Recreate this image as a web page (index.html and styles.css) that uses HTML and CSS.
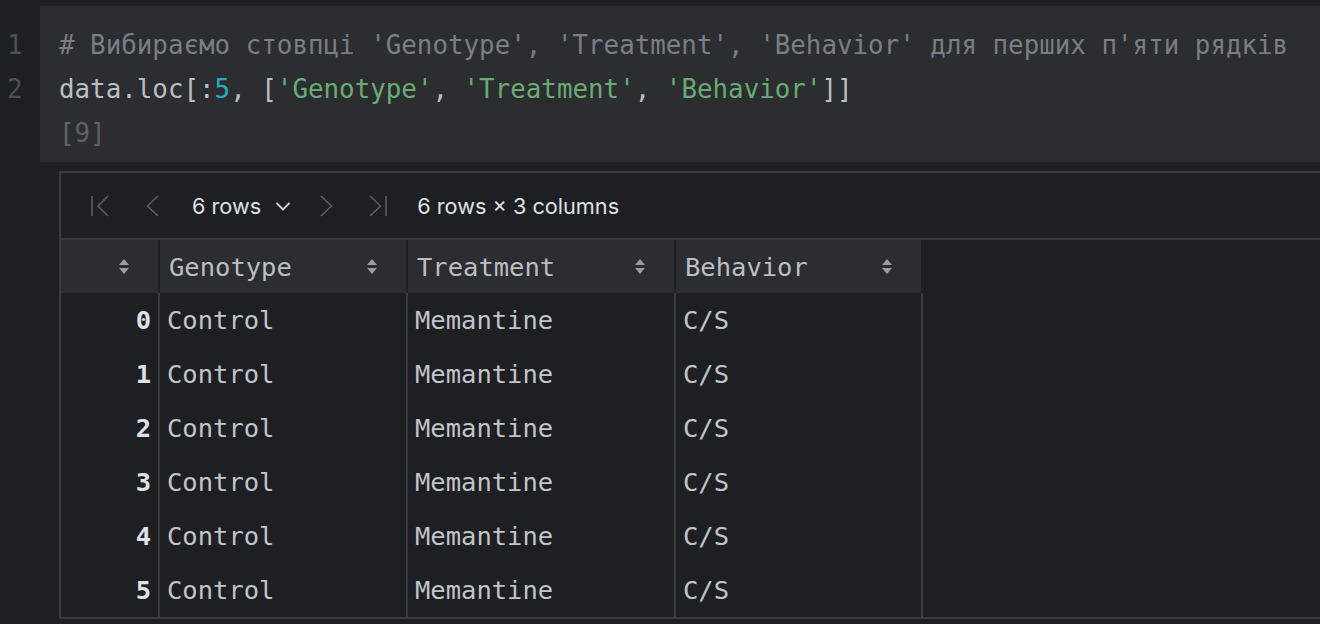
FILE: index.html
```html
<!DOCTYPE html>
<html lang="uk">
<head>
<meta charset="utf-8">
<title>Notebook cell</title>
<link rel="stylesheet" href="styles.css">
</head>
<body>
<div class="cell">
  <div class="gutter">
    <div class="ln">1</div>
    <div class="ln">2</div>
  </div>
  <div class="code">
    <div class="line"><span class="cm"># Вибираємо стовпці 'Genotype', 'Treatment', 'Behavior' для перших п'яти рядків</span></div>
    <div class="line">data.loc[:<span class="num">5</span>, [<span class="str">'Genotype'</span>, <span class="str">'Treatment'</span>, <span class="str">'Behavior'</span>]]</div>
    <div class="line exec">[9]</div>
  </div>
</div>

<div class="frame">
  <div class="toolbar">
    <svg class="ico first" width="24" height="24" viewBox="0 0 24 24"><path d="M4 2V22M20 2L10 12L20 22" /></svg>
    <svg class="ico prev" width="24" height="24" viewBox="0 0 24 24"><path d="M18 2L7.5 12L18 22" /></svg>
    <span class="rows">6 rows</span>
    <svg class="ico drop" width="16" height="24" viewBox="0 0 16 24"><path d="M1.5 9L8 15.5L14.5 9" /></svg>
    <svg class="ico next" width="24" height="24" viewBox="0 0 24 24"><path d="M6 2L16.5 12L6 22" /></svg>
    <svg class="ico last" width="24" height="24" viewBox="0 0 24 24"><path d="M7 2L17.5 12L7 22M23 2V22" /></svg>
    <span class="summary">6 rows × 3 columns</span>
  </div>
  <div class="grid">
    <div class="hd idx"><svg class="sort" width="10" height="16" viewBox="0 0 10 16"><path d="M5 0L10 6H0Z M0 9H10L5 15Z" /></svg></div>
    <div class="hd"><span>Genotype</span><svg class="sort" width="10" height="16" viewBox="0 0 10 16"><path d="M5 0L10 6H0Z M0 9H10L5 15Z" /></svg></div>
    <div class="hd"><span>Treatment</span><svg class="sort" width="10" height="16" viewBox="0 0 10 16"><path d="M5 0L10 6H0Z M0 9H10L5 15Z" /></svg></div>
    <div class="hd"><span>Behavior</span><svg class="sort" width="10" height="16" viewBox="0 0 10 16"><path d="M5 0L10 6H0Z M0 9H10L5 15Z" /></svg></div>
    <div class="hd-fill"></div>

    <div class="c idx">0</div><div class="c">Control</div><div class="c">Memantine</div><div class="c">C/S</div><div class="fill"></div>
    <div class="c idx">1</div><div class="c">Control</div><div class="c">Memantine</div><div class="c">C/S</div><div class="fill"></div>
    <div class="c idx">2</div><div class="c">Control</div><div class="c">Memantine</div><div class="c">C/S</div><div class="fill"></div>
    <div class="c idx">3</div><div class="c">Control</div><div class="c">Memantine</div><div class="c">C/S</div><div class="fill"></div>
    <div class="c idx">4</div><div class="c">Control</div><div class="c">Memantine</div><div class="c">C/S</div><div class="fill"></div>
    <div class="c idx">5</div><div class="c">Control</div><div class="c">Memantine</div><div class="c">C/S</div><div class="fill"></div>
  </div>
</div>
</body>
</html>
```

FILE: styles.css
```css
html, body {
  margin: 0;
  padding: 0;
  background: #1e1f22;
  overflow: hidden;
}

body {
  width: 1320px;
  height: 624px;
  font-family: "DejaVu Sans Mono", "Liberation Mono", monospace;
  color: #bcbec4;
}

.cell {
  display: flex;
  padding-top: 6px;
}

.gutter {
  width: 40px;
  padding-top: 17px;
  flex: none;
}

.ln {
  height: 44px;
  line-height: 44px;
  font-size: 26px;
  color: #4b5059;
  padding-left: 7px;
}

.code {
  flex: 1;
  background: #2b2d30;
  padding: 17px 0 7px 19px;
  font-size: 25.85px;
}

.line {
  height: 44px;
  line-height: 44px;
  white-space: pre;
}

.cm { color: #7a7e85; }
.str { color: #6aab73; }
.num { color: #2aacb8; }
.exec { color: #5f6268; }

.frame {
  margin: 9px -4px 0 59px;
  border: 2px solid #393b40;
}

.toolbar {
  height: 65px;
  display: flex;
  align-items: center;
  border-bottom: 2px solid #393b40;
  font-family: "Inter", "Noto Sans", sans-serif;
  font-size: 21.7px;
  color: #dfe1e5;
}

.ico {
  flex: none;
  fill: none;
  stroke: #5a5d63;
  stroke-width: 1.6;
}

.first { margin-left: 27px; }
.prev { margin-left: 28px; }
.rows { margin-left: 28px; }
.drop { margin-left: 14px; stroke: #ced0d6; stroke-width: 1.8; }
.next { margin-left: 24px; }
.last { margin-left: 24px; }
.summary { margin-left: 30px; }

.grid {
  display: grid;
  grid-template-columns: 99px 248px 268px 247px 1fr;
  grid-template-rows: 53px repeat(6, 54px);
  font-size: 25.5px;
}

.hd {
  background: #2b2d30;
  border-right: 2px solid #1e1f22;
  display: flex;
  align-items: center;
  justify-content: space-between;
  padding: 0 29px 0 9px;
  color: #bcbec4;
}

.hd.idx {
  justify-content: flex-end;
}

.sort {
  flex: none;
  fill: #9a9da3;
}

.c {
  border-right: 2px solid #393b40;
  display: flex;
  align-items: center;
  padding-left: 7px;
  color: #c2c4ca;
}

.c.idx {
  justify-content: flex-end;
  padding: 0 7px 0 0;
  font-weight: bold;
  color: #dfe1e5;
}
```
